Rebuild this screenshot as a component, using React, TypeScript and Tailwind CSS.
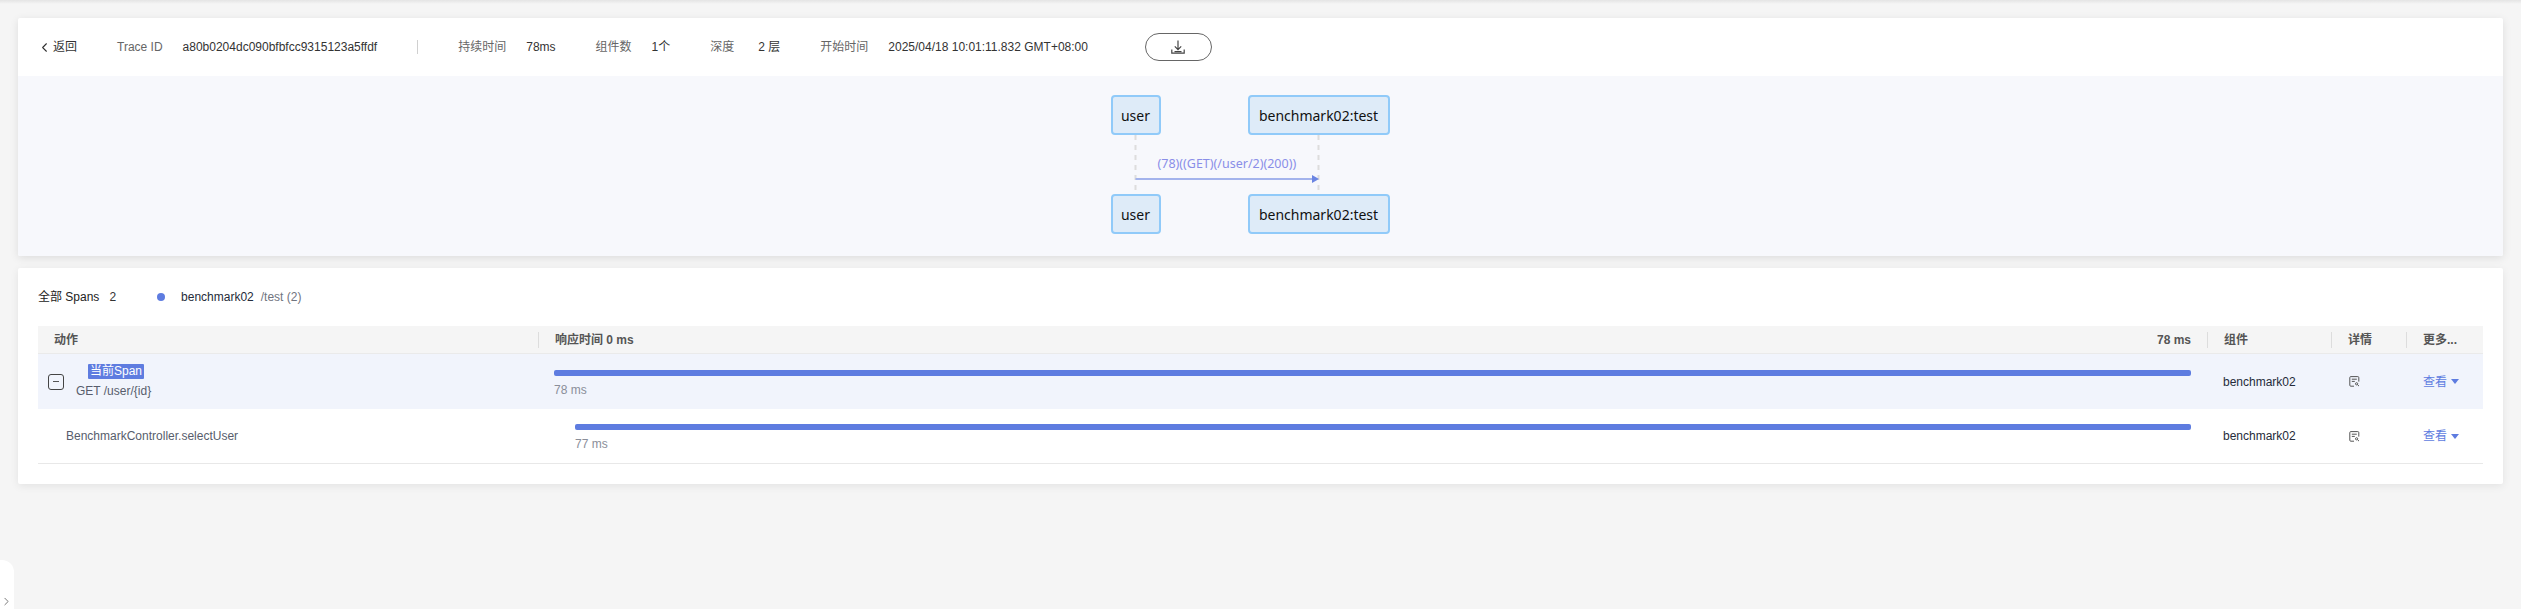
import React from 'react';
import { ChevronLeft, ChevronRight } from 'lucide-react';

const FONT = "font-['Liberation_Sans','Noto_Sans_CJK_SC',sans-serif]";
const DIAGRAM_FONT = "font-['Noto_Sans','Noto_Sans_CJK_SC',sans-serif]";

const DownloadIcon = () => (
  <svg width="16" height="16" viewBox="0 0 16 16" fill="none" stroke="#444" strokeWidth="1.2">
    <path d="M8 1.5v9M4.8 7.4 8 10.6l3.2-3.2" />
    <path d="M1.8 10.5v3.6h12.4v-3.6" />
    <path d="M4.5 12.6h7" strokeWidth="1.4" />
  </svg>
);

const DetailIcon = () => (
  <svg width="11" height="11" viewBox="0 0 11 11" fill="none" stroke="#555" strokeWidth="1">
    <path d="M5 10.2H1.8a1 1 0 0 1-1-1V1.6a1 1 0 0 1 1-1h7a1 1 0 0 1 1 1v4" />
    <path d="M2.8 3.2h5M2.8 5.4h3" />
    <circle cx="7.6" cy="7.8" r="1.1" />
    <path d="M8.5 8.7l1.5 1.4" />
  </svg>
);

const Meta = ({ label, value, ml, gap }: { label: string; value: string; ml: string; gap: string }) => (
  <div className={`flex items-center ${ml}`}>
    <span className="text-[#666]">{label}</span>
    <span className={`text-[#333] ${gap}`}>{value}</span>
  </div>
);

const Node = ({ text, className }: { text: string; className: string }) => (
  <div className={`absolute flex h-[40px] items-center justify-center rounded-[4px] border-2 border-[#90caf9] bg-[#deebf8] text-[14px] text-[#111] ${className}`}>
    {text}
  </div>
);

const HeaderCell = ({ children, first }: { children: React.ReactNode; first?: boolean }) => (
  <div className={`flex h-full items-center ${first ? 'pl-[16px]' : ''}`}>
    <div className={`flex h-[16px] w-full items-center justify-between font-semibold text-[#555] ${first ? '' : 'border-l border-[#ddd] pl-[16px] pr-[16px]'}`}>
      {children}
    </div>
  </div>
);

const More = () => (
  <div className="flex items-center pl-[17px] text-[#5e7ce0]">
    <span>查看</span>
    <span className="ml-[4px] h-0 w-0 border-x-[4px] border-t-[5px] border-x-transparent border-t-[#5e7ce0]" />
  </div>
);

const Row = ({ action, barOffset, ms, active, bottom }: { action: React.ReactNode; barOffset: string; ms: string; active?: boolean; bottom?: boolean }) => (
  <div className={`grid h-[55px] grid-cols-[500px_1669px_124px_75px_76px] items-center ${active ? 'bg-[#f1f4fc]' : 'bg-white'} ${bottom ? 'h-[54px] border-b border-[#e8e8e8]' : ''}`}>
    <div>{action}</div>
    <div className={`pr-[16px] pt-[4px] ${barOffset}`}>
      <div className="h-[6px] rounded-[2px] bg-[#5e7ce0]" />
      <div className="mt-[6px] leading-[16px] text-[#8a8e99]">{ms}</div>
    </div>
    <div className="pl-[16px] text-[#252b3a]">benchmark02</div>
    <div className="pl-[18px]"><DetailIcon /></div>
    <More />
  </div>
);

export default function App() {
  return (
    <div className={`relative h-[609px] overflow-hidden bg-[#f5f5f5] px-[18px] pt-[18px] text-[12px] ${FONT}`}>
      <div className="absolute inset-x-0 top-0 h-[4px] bg-gradient-to-b from-[#e4e4e4] to-[#f5f5f5]" />

      <div className="relative h-[238px] overflow-hidden rounded-[2px] bg-white shadow-[0_2px_8px_rgba(0,0,0,0.1)]">
        <div className="flex h-[58px] items-center">
          <div className="ml-[19px] flex items-center text-[#333]">
            <ChevronLeft size={15} strokeWidth={1.7} />
            <span className="ml-[1px]">返回</span>
          </div>
          <span className="ml-[40px] text-[#666]">Trace ID</span>
          <span className="ml-[20px] text-[#333]">a80b0204dc090bfbfcc9315123a5ffdf</span>
          <span className="ml-[40px] h-[14px] border-l border-[#d0d0d0]" />
          <Meta label="持续时间" value="78ms" ml="ml-[40px]" gap="ml-[20px]" />
          <Meta label="组件数" value="1个" ml="ml-[40px]" gap="ml-[20px]" />
          <Meta label="深度" value="2 层" ml="ml-[40px]" gap="ml-[24px]" />
          <Meta label="开始时间" value="2025/04/18 10:01:11.832 GMT+08:00" ml="ml-[40px]" gap="ml-[20px]" />
          <button className="ml-[57px] flex h-[28px] w-[67px] items-center justify-center rounded-[14px] border border-[#666] bg-white">
            <DownloadIcon />
          </button>
        </div>

        <div className="flex h-[180px] justify-center bg-[#f7f8fc] pr-[22px]">
          <div className={`relative h-full w-[278px] ${DIAGRAM_FONT}`}>
            <svg className="absolute left-0 top-0" width="278" height="180" fill="none">
              <path d="M24.5 59V118M207.5 59V118" stroke="#ddd" strokeWidth="2" strokeDasharray="5 5" />
              <path d="M24.5 103H203" stroke="#a3b3ec" strokeWidth="2" />
              <path d="M201 99l7 4-7 4z" fill="#6b85e2" />
            </svg>
            <Node text="user" className="left-0 top-[19px] w-[50px]" />
            <Node text="benchmark02:test" className="left-[137px] top-[19px] w-[142px]" />
            <div className="absolute left-[47px] top-[78px] whitespace-nowrap text-[12.5px] leading-[20px] text-[#8a8ee8]">(78)((GET)(/user/2)(200))</div>
            <Node text="user" className="left-0 top-[118px] w-[50px]" />
            <Node text="benchmark02:test" className="left-[137px] top-[118px] w-[142px]" />
          </div>
        </div>
      </div>

      <div className="mt-[12px] h-[216px] rounded-[2px] bg-white px-[20px] shadow-[0_2px_8px_rgba(0,0,0,0.08)]">
        <div className="flex h-[58px] items-center">
          <span className="text-[#222]">全部 Spans</span>
          <span className="ml-[10px] text-[#333]">2</span>
          <span className="ml-[41px] h-[8px] w-[8px] rounded-full bg-[#5e7ce0]" />
          <span className="ml-[16px] text-[#252b3a]">benchmark02</span>
          <span className="ml-[7px] text-[#71757f]">/test (2)</span>
        </div>

        <div className="grid h-[28px] grid-cols-[500px_1669px_124px_75px_76px] border-b border-[#eaeaea] bg-[#f5f5f5]">
          <HeaderCell first>动作</HeaderCell>
          <HeaderCell><span>响应时间 0 ms</span><span>78 ms</span></HeaderCell>
          <HeaderCell>组件</HeaderCell>
          <HeaderCell>详情</HeaderCell>
          <HeaderCell>更多...</HeaderCell>
        </div>

        <Row
          active
          barOffset="pl-[16px]"
          ms="78 ms"
          action={
            <div className="flex items-center pl-[10px]">
              <div className="flex h-[16px] w-[16px] items-center justify-center rounded-[3px] border border-[#444]">
                <span className="h-[1px] w-[6px] bg-[#555]" />
              </div>
              <div className="ml-[12px]">
                <span className="ml-[12px] block w-fit rounded-[1px] bg-[#5e7ce0] px-[2px] leading-[15px] text-white">当前Span</span>
                <div className="mt-[4px] leading-[16px] text-[#575d6c]">GET /user/{'{id}'}</div>
              </div>
            </div>
          }
        />
        <Row
          bottom
          barOffset="pl-[37px]"
          ms="77 ms"
          action={<div className="pl-[28px] text-[#575d6c]">BenchmarkController.selectUser</div>}
        />
      </div>

      <div className="absolute bottom-0 left-0 h-[49px] w-[14px] rounded-tr-[12px] bg-white">
        <ChevronRight className="absolute bottom-[1px] left-0 text-[#777]" size={13} strokeWidth={1.8} />
      </div>
    </div>
  );
}
